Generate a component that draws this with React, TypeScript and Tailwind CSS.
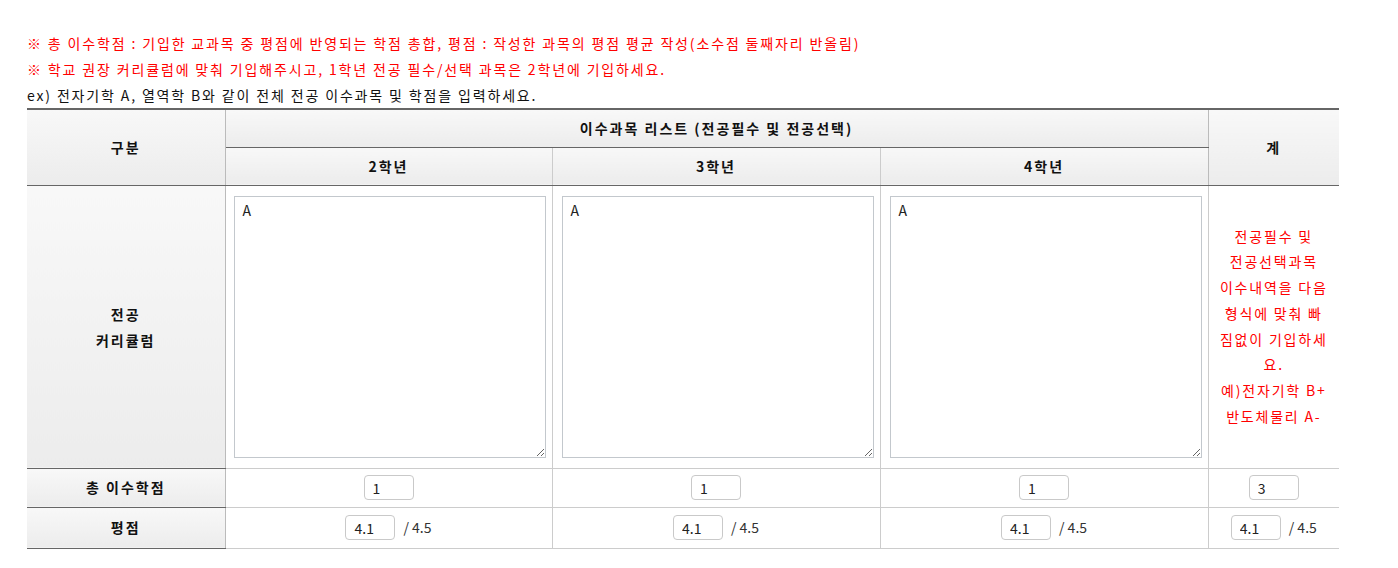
import React from "react";

const th =
  "bg-gradient-to-b from-[#f8f8f8] to-[#ececec] font-bold text-[14px] tracking-[2px] text-[#111] text-center align-middle";

function Ta() {
  return (
    <textarea
      defaultValue="A"
      className="block w-full h-[262px] border border-[#c3c8cd] bg-white px-[8px] pt-[3px] pb-[5px] text-[14px] leading-[20px] text-[#222] resize-y outline-none"
    />
  );
}

function Num({ v }: { v: string }) {
  return (
    <input
      defaultValue={v}
      className="w-[50px] h-[25px] rounded-[4px] border border-[#c9c9c9] px-[8px] text-[14px] text-[#222] outline-none"
    />
  );
}

function Grade() {
  return (
    <div className="flex items-center justify-center gap-[8px]">
      <Num v="4.1" />
      <span className="text-[14px] text-[#333]">/ 4.5</span>
    </div>
  );
}

export default function App() {
  const note = [
    "전공필수 및",
    "전공선택과목",
    "이수내역을 다음",
    "형식에 맞춰 빠",
    "짐없이 기입하세",
    "요.",
    "예)전자기학 B+",
    "반도체물리 A-",
  ];
  return (
    <div
      className="bg-white w-[1398px] h-[568px] pt-[30px] pl-[27px] text-[#111]"
      style={{ fontFamily: '"Noto Sans CJK KR", "Noto Sans", sans-serif' }}
    >
      <div className="text-[14px] leading-[26px] tracking-[1.85px]">
        <p className="text-[#ff0000]">
          ※ 총 이수학점 : 기입한 교과목 중 평점에 반영되는 학점 총합, 평점 : 작성한 과목의 평점 평균 작성(소수점 둘째자리 반올림)
        </p>
        <p className="text-[#ff0000]">
          ※ 학교 권장 커리큘럼에 맞춰 기입해주시고, 1학년 전공 필수/선택 과목은 2학년에 기입하세요.
        </p>
        <p>ex) 전자기학 A, 열역학 B와 같이 전체 전공 이수과목 및 학점을 입력하세요.</p>
      </div>
      <table className="w-[1312px] border-collapse table-fixed border-t-2 border-t-[#666]">
        <colgroup>
          <col className="w-[198px]" />
          <col className="w-[327px]" />
          <col className="w-[328px]" />
          <col className="w-[328px]" />
          <col className="w-[131px]" />
        </colgroup>
        <tbody>
          <tr className="h-[38px]">
            <th rowSpan={2} className={`${th} border-r border-r-[#bbb] border-b border-b-[#666]`}>
              구분
            </th>
            <th colSpan={3} className={`${th} border-b border-b-[#666]`}>
              이수과목 리스트 (전공필수 및 전공선택)
            </th>
            <th rowSpan={2} className={`${th} border-l border-l-[#bbb] border-b border-b-[#666]`}>
              계
            </th>
          </tr>
          <tr className="h-[38px]">
            <th className={`${th} border-r border-r-[#ccc] border-b border-b-[#666]`}>2학년</th>
            <th className={`${th} border-r border-r-[#ccc] border-b border-b-[#666]`}>3학년</th>
            <th className={`${th} border-b border-b-[#666]`}>4학년</th>
          </tr>
          <tr className="h-[283px]">
            <th className={`${th} border-r border-r-[#bbb] border-b border-b-[#666] leading-[26px]`}>
              전공
              <br />
              커리큘럼
            </th>
            <td className="border border-[#ccc] pl-[8px] pr-[6px] py-[10px] align-top">
              <Ta />
            </td>
            <td className="border border-[#ccc] pl-[9px] pr-[6px] py-[10px] align-top">
              <Ta />
            </td>
            <td className="border border-[#ccc] pl-[9px] pr-[6px] py-[10px] align-top">
              <Ta />
            </td>
            <td className="border-b border-l border-[#ccc] px-[4px] text-center text-[14px] leading-[25.7px] tracking-[1.8px] text-[#ff0000] align-middle">
              {note.map((l) => (
                <div key={l} className="whitespace-nowrap">
                  {l}
                </div>
              ))}
            </td>
          </tr>
          <tr className="h-[39px]">
            <th className={`${th} border-r border-r-[#bbb] border-b border-b-[#666]`}>총 이수학점</th>
            <td className="border border-[#ccc] text-center"><Num v="1" /></td>
            <td className="border border-[#ccc] text-center"><Num v="1" /></td>
            <td className="border border-[#ccc] text-center"><Num v="1" /></td>
            <td className="border-b border-l border-[#ccc] text-center"><Num v="3" /></td>
          </tr>
          <tr className="h-[41px]">
            <th className={`${th} border-r border-r-[#bbb] border-b border-b-[#666]`}>평점</th>
            <td className="border border-[#ccc]"><Grade /></td>
            <td className="border border-[#ccc]"><Grade /></td>
            <td className="border border-[#ccc]"><Grade /></td>
            <td className="border-b border-l border-[#ccc]"><Grade /></td>
          </tr>
        </tbody>
      </table>
    </div>
  );
}
